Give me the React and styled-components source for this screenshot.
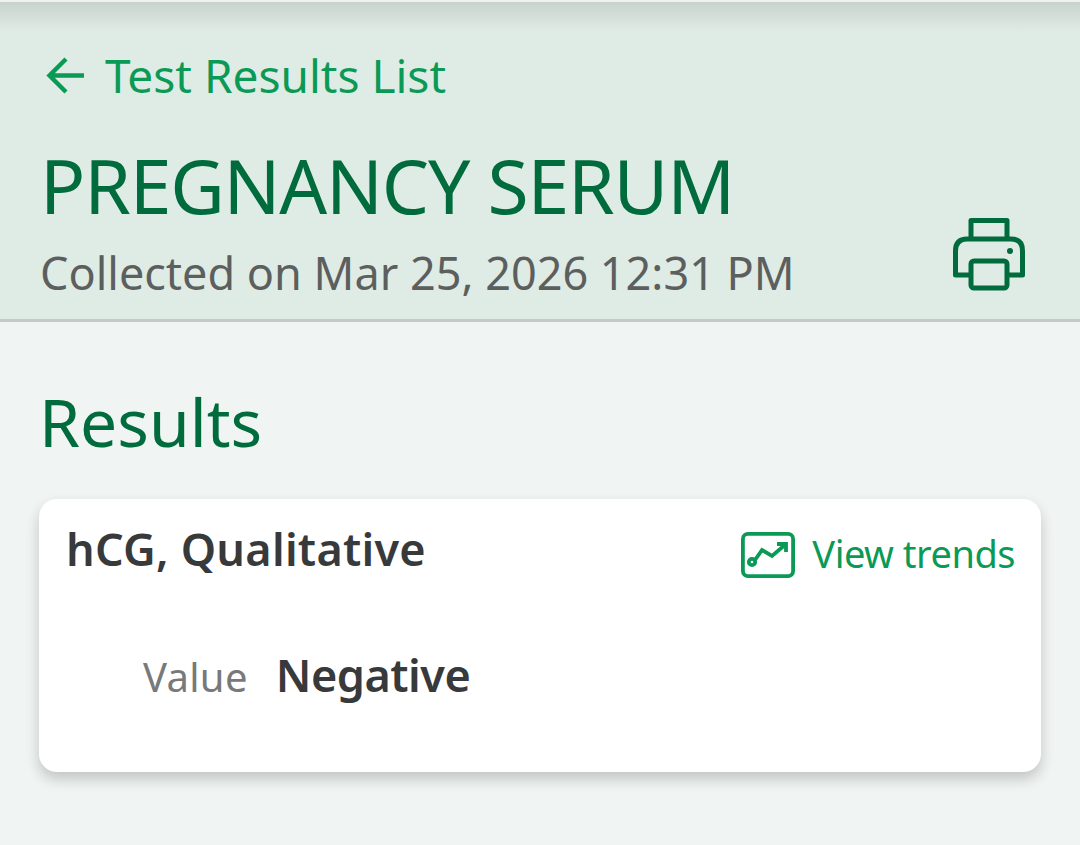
import React from 'react'
import styled, { createGlobalStyle } from 'styled-components'

const Global = createGlobalStyle`
  html, body { margin: 0; padding: 0; background: #f0f5f3; }
  body { font-family: "Noto Sans", "Open Sans", sans-serif; }
`

const Page = styled.div`
  width: 1080px;
  height: 845px;
  overflow: hidden;
  background: #f0f5f3;
`

const Header = styled.header`
  box-sizing: border-box;
  height: 322px;
  background: #dfece5;
  border-top: 2px solid #eef1ef;
  border-bottom: 3px solid #c6c9c7;
`

const TopShade = styled.div`
  height: 30px;
  margin-bottom: 20px;
  background: linear-gradient(#c9d2cd, #dfece5);
`

const BackLink = styled.a`
  display: flex;
  align-items: center;
  gap: 19px;
  height: 46px;
  padding-left: 46px;
  color: #0b9a55;
  font-size: 46px;
`

const TitleRow = styled.div`
  display: flex;
  justify-content: space-between;
  align-items: flex-end;
  padding: 0 55px 0 40px;
`

const Title = styled.h1`
  margin: 44px 0 0;
  color: #006b3c;
  font-size: 75px;
  font-weight: 400;
  line-height: 86px;
  letter-spacing: -1.2px;
`

const Collected = styled.div`
  margin-top: 16px;
  color: #5c5f5e;
  font-size: 45px;
  line-height: 58px;
`

const PrintIcon = styled.svg`
  width: 72px;
  height: 74px;
  margin-bottom: 11px;
  color: #006b3c;
`

const Section = styled.section`
  padding: 59px 39px 0;
`

const SectionTitle = styled.h2`
  margin: 0 0 38px;
  color: #006b3c;
  font-size: 66px;
  font-weight: 400;
  line-height: 80px;
`

const Card = styled.div`
  box-sizing: border-box;
  height: 273px;
  padding: 20px 26px 0 27px;
  background: #fff;
  border-radius: 18px;
  box-shadow: 0 7px 14px rgba(0, 0, 0, 0.2);
`

const CardHead = styled.div`
  display: flex;
  justify-content: space-between;
  align-items: center;
`

const TestName = styled.div`
  color: #38393b;
  font-size: 45px;
  font-weight: 600;
  line-height: 56px;
  letter-spacing: 0.25px;
`

const Trends = styled.a`
  display: flex;
  align-items: center;
  gap: 17px;
  margin-top: 8px;
  color: #0b9a55;
  font-size: 38px;
  letter-spacing: -0.5px;
`

const TrendIcon = styled.svg`
  width: 54px;
  height: 46px;
  margin-top: 4px;
`

const ValueRow = styled.div`
  display: flex;
  align-items: baseline;
  gap: 28px;
  margin-top: 65px;
  padding-left: 77px;
`

const ValueLabel = styled.span`
  color: #77797a;
  font-size: 40px;
  letter-spacing: 0.3px;
`

const Value = styled.span`
  color: #38393b;
  font-size: 45px;
  font-weight: 600;
  letter-spacing: -0.5px;
`

export default function App() {
  return (
    <Page>
      <Global />
      <Header>
        <TopShade />
        <BackLink>
          <svg width="40" height="40" viewBox="0 0 40 40" fill="none" stroke="currentColor" strokeWidth="4.4">
            <path d="M38 20.500H4M20 4L3.500 20.500L20 37" />
          </svg>
          Test Results List
        </BackLink>
        <TitleRow>
          <div>
            <Title>PREGNANCY SERUM</Title>
            <Collected>Collected on Mar 25, 2026 12:31 PM</Collected>
          </div>
          <PrintIcon viewBox="0 0 72 74" fill="none" stroke="currentColor" strokeWidth="5" strokeLinejoin="round">
            <path d="M18 22V3.500H54V22" />
            <path d="M18 58H2.500V34Q2.500 22 14 22H58Q69.500 22 69.500 34V58H54" />
            <rect x="18" y="44" width="36" height="27" rx="3" />
            <circle cx="57" cy="34" r="3" fill="currentColor" stroke="none" />
          </PrintIcon>
        </TitleRow>
      </Header>
      <Section>
        <SectionTitle>Results</SectionTitle>
        <Card>
          <CardHead>
            <TestName>hCG, Qualitative</TestName>
            <Trends>
              <TrendIcon viewBox="0 0 54 46" fill="none" stroke="currentColor" strokeWidth="3.800">
                <rect x="1.900" y="1.900" width="50.200" height="42.200" rx="5" />
                <circle cx="11" cy="30" r="3.200" />
                <path d="M14 28L21 18L31 24L45 12" />
                <path d="M36 12H45V20" />
              </TrendIcon>
              View trends
            </Trends>
          </CardHead>
          <ValueRow>
            <ValueLabel>Value</ValueLabel>
            <Value>Negative</Value>
          </ValueRow>
        </Card>
      </Section>
    </Page>
  )
}
